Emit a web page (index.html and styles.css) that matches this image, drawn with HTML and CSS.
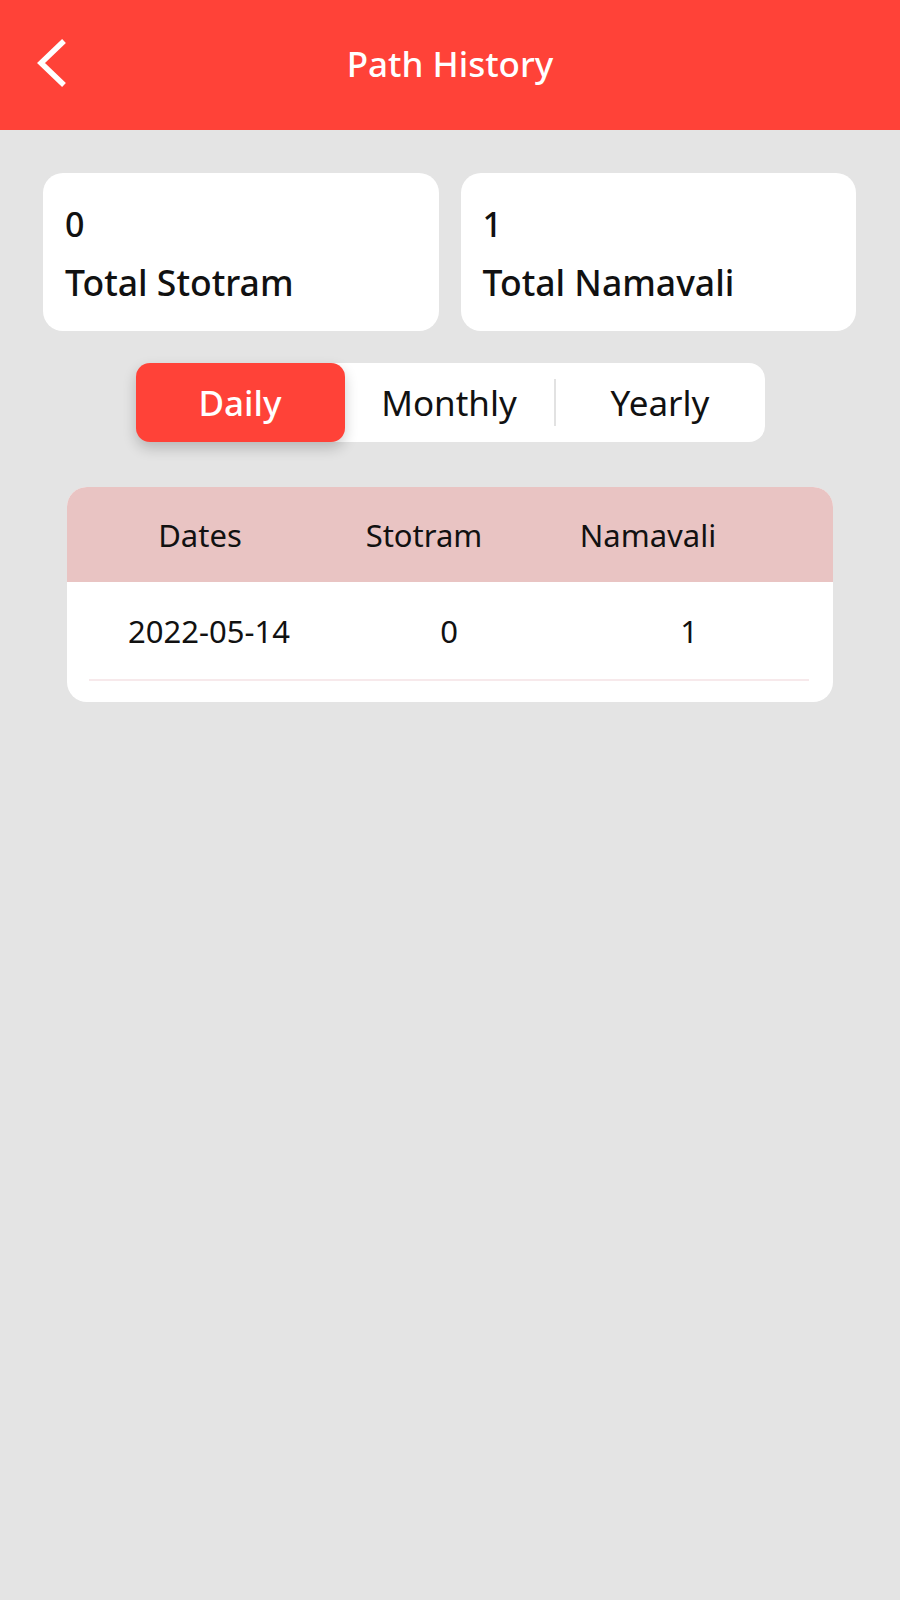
FILE: index.html
```html
<!DOCTYPE html>
<html>
<head>
	<meta http-equiv="Content-Type" content="text/html; charset=utf-8">
	<meta name="viewport" content="width=device-width,user-scalable=no">
	<title>Path History</title>
	<link rel="stylesheet" href="styles.css">
</head>
<body>
	<div class="topbar">
		<a class="back" href="#">
			<svg width="31" height="50" viewBox="0 0 31 50"><polyline points="27,3 4,25 27,47" fill="none" stroke="#fff" stroke-width="5.5" stroke-linecap="butt" stroke-linejoin="miter"/></svg>
		</a>
		<h1>Path History</h1>
		<span></span>
	</div>

	<div class="stats">
		<div class="stat">
			<p class="num">0</p>
			<p class="label">Total Stotram</p>
		</div>
		<div class="stat">
			<p class="num">1</p>
			<p class="label">Total Namavali</p>
		</div>
	</div>

	<div class="tabs">
		<div class="tab on">Daily</div>
		<div class="tab">Monthly</div>
		<span class="sep"></span>
		<div class="tab">Yearly</div>
	</div>

	<div class="table">
		<div class="thead">
			<span>Dates</span>
			<span>Stotram</span>
			<span>Namavali</span>
		</div>
		<div class="row">
			<span>2022-05-14</span>
			<span>0</span>
			<span>1</span>
		</div>
	</div>
</body>
</html>
```

FILE: styles.css
```css
*{margin: 0; padding: 0; box-sizing: border-box;}
body{background: #E4E4E4; font-family: "Noto Sans", "Open Sans", sans-serif; color: #111; min-height: 1600px;}

.topbar{height: 130px; background: #FF4238; display: grid; grid-template-columns: 1fr auto 1fr; align-items: center;}
.topbar h1{color: #FFF; font-size: 35px; font-weight: 500; margin-top: -4px;}
.back{display: flex; padding-left: 37px; margin-top: -4px;}

.stats{display: flex; gap: 22px; padding: 0 44px 0 43px; margin-top: 43px;}
.stat{flex: 1; height: 158px; background: #FFF; border-radius: 20px; padding: 22px 22px 0;}
.stat p{line-height: 58px; font-weight: 500;}
.stat .num{font-size: 34px;}
.stat .label{font-size: 35.5px;}

.tabs{width: 629px; height: 79px; margin: 32px auto 0; background: #FFF; border-radius: 16px; display: flex; align-items: center;}
.tab{flex: 1; height: 100%; display: flex; align-items: center; justify-content: center; font-size: 35px;}
.tab.on{background: #FF4238; color: #FFF; font-weight: 500; border-radius: 14px; box-shadow: 0 6px 14px rgba(0,0,0,0.2);}
.sep{width: 2px; height: 47px; background: #E2E2E2;}

.table{margin: 45px 67px 0; background: #FFF; border-radius: 20px; overflow: hidden; padding-bottom: 21px;}
.thead{height: 95px; background: #E9C4C3; display: flex; align-items: center; padding: 0 73px 0 21px;}
.thead span, .row span{flex: 1; text-align: center; font-size: 31px;}
.row{height: 99px; display: flex; align-items: center; margin: 0 24px 0 22px; border-bottom: 2px solid #F7E9EB;}
```
